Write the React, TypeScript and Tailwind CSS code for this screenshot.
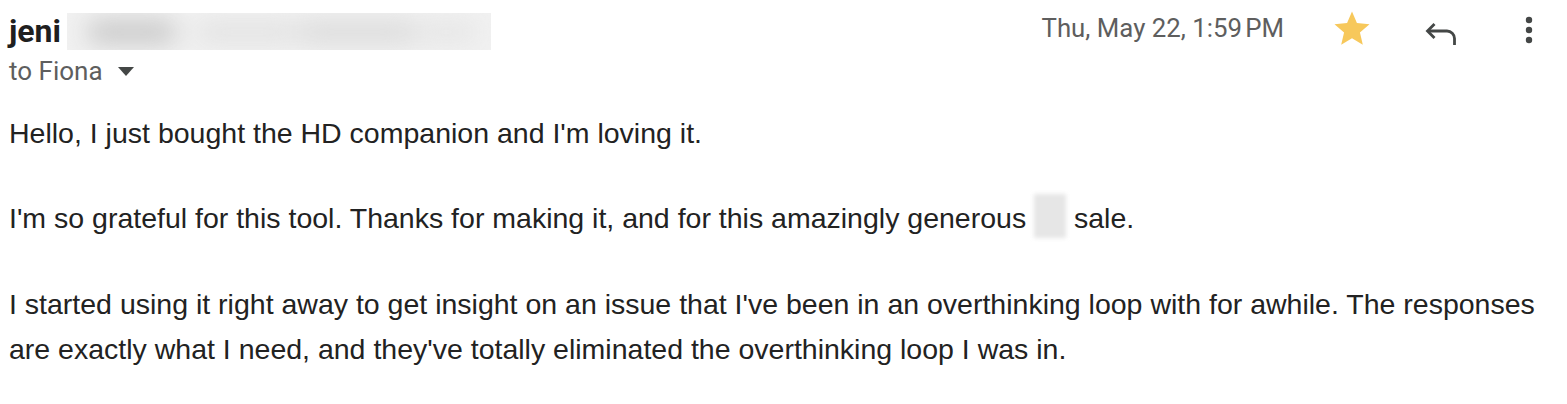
import React from "react";

function Star() {
  return (
    <svg width="42" height="42" viewBox="0 0 24 24" aria-hidden="true">
      <path d="M12 17.27L18.18 21l-1.64-7.03L22 9.24l-7.19-.61L12 2 9.19 8.63 2 9.24l5.46 4.73L5.82 21z" fill="#f7c85b" />
    </svg>
  );
}

function Reply() {
  return (
    <svg width="34" height="25" viewBox="0 0 34 25" aria-hidden="true">
      <path d="M9.5 4 2.5 11l7 7" fill="none" stroke="#444746" strokeWidth="2.8" strokeLinejoin="miter" />
      <path d="M3 11H22a7.5 7.5 0 0 1 7.5 7.5V25" fill="none" stroke="#444746" strokeWidth="2.8" />
    </svg>
  );
}

function Dots() {
  return (
    <svg width="12" height="30" viewBox="0 0 12 30" aria-hidden="true">
      <circle cx="6" cy="5" r="3.2" fill="#444746" />
      <circle cx="6" cy="15" r="3.2" fill="#444746" />
      <circle cx="6" cy="25" r="3.2" fill="#444746" />
    </svg>
  );
}

export default function App() {
  return (
    <div className="w-[1567px] h-[404px] bg-white overflow-hidden pl-[9px] pr-[20px]">
      <div className="flex items-start justify-between pt-[12px]">
        <div className="flex flex-col">
          <div className="flex items-center h-[38px]">
            <span
              className="text-[32px] font-bold text-[#1f1f1f] leading-none"
              style={{ fontFamily: "Roboto, 'Liberation Sans', sans-serif" }}
            >
              jeni
            </span>
            <div className="ml-[6px] w-[424px] h-[37px] relative overflow-hidden bg-[#f1f1f1]">
              <div className="absolute inset-0 blur-md">
                <div className="absolute left-[20px] top-[8px] w-[90px] h-[22px] rounded-full bg-[#c6c6c6]" />
                <div className="absolute left-[130px] top-[10px] w-[100px] h-[18px] rounded-full bg-[#e0e0e0]" />
                <div className="absolute left-[230px] top-[9px] w-[120px] h-[20px] rounded-full bg-[#d9d9d9]" />
                <div className="absolute left-[350px] top-[10px] w-[60px] h-[18px] rounded-full bg-[#e4e4e4]" />
              </div>
            </div>
          </div>
          <div
            className="flex items-center mt-[8px] text-[26px] text-[#5e5e5e] leading-none"
            style={{ fontFamily: "Roboto, 'Liberation Sans', sans-serif" }}
          >
            <span>to Fiona</span>
            <span className="ml-[15px] inline-block w-0 h-0 border-l-[8px] border-r-[8px] border-t-[9px] border-l-transparent border-r-transparent border-t-[#444746]" />
          </div>
        </div>
        <div className="flex items-center h-[34px] mr-[12px]">
          <span
            className="text-[25.8px] text-[#5e5e5e] leading-none"
            style={{ fontFamily: "Roboto, 'Liberation Sans', sans-serif" }}
          >
            Thu, May 22, 1:59{"\u202F"}PM
          </span>
          <span className="ml-[47px] flex items-center"><Star /></span>
          <span className="ml-[52px] mt-[6px] flex items-center"><Reply /></span>
          <span className="ml-[64px] mt-[2px] flex items-center"><Dots /></span>
        </div>
      </div>
      <div
        className="mt-[27px] text-[28.5px] leading-[45px] text-[#222222]"
        style={{ fontFamily: "'Liberation Sans', Arial, sans-serif" }}
      >
        <p>Hello, I just bought the HD companion and I'm loving it.</p>
        <p className="mt-[40px]">
          I'm so grateful for this tool. Thanks for making it, and for this amazingly generous{" "}
          <span className="relative -top-[4px] inline-block align-middle w-[32px] h-[44px] bg-[#e6e6e6] blur-[2px]" />{" "}
          sale.
        </p>
        <p className="mt-[40px]">
          I started using it right away to get insight on an issue that I've been in an overthinking loop with for awhile. The responses are exactly what I need, and they've totally eliminated the overthinking loop I was in.
        </p>
      </div>
    </div>
  );
}
